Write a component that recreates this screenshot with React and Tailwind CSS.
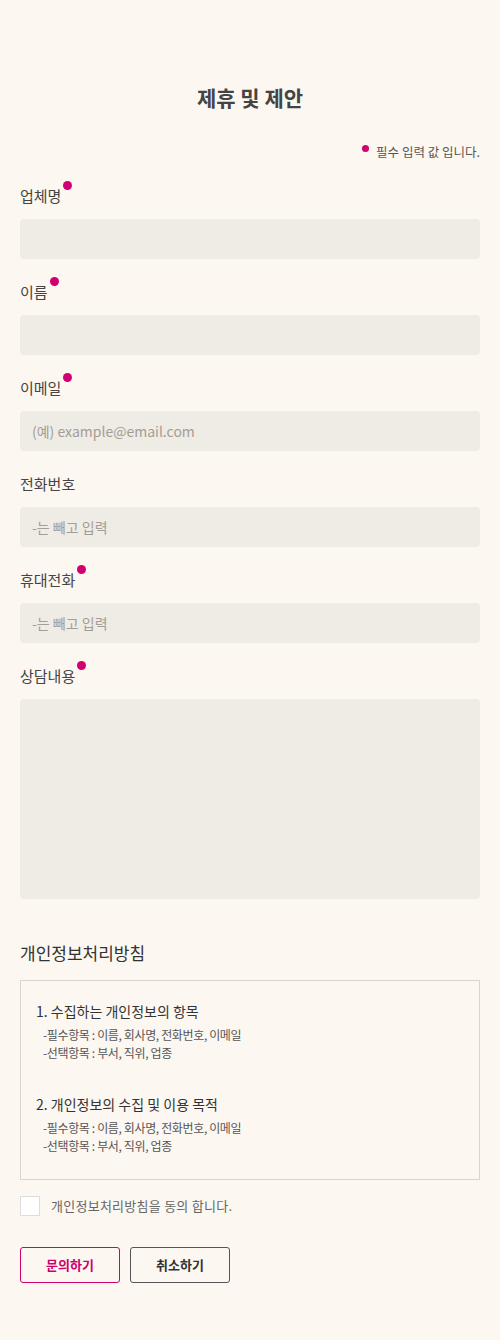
const font = { fontFamily: '"Noto Sans CJK KR", "Noto Sans", sans-serif' }

const Dot = () => (
  <span className="inline-block w-[9px] h-[9px] rounded-full bg-[#d0006f] align-top ml-[2px] mt-[-4px]" />
)

const Field = ({ label, required, placeholder = '', area }) => (
  <div className="mb-[22px]">
    <label className="block text-[15px] leading-[22px] text-[#444] mb-3">
      {label}
      {required && <Dot />}
    </label>
    {area ? (
      <textarea className="block w-full h-[200px] rounded bg-[#efebe5] resize-none outline-none px-4 py-3 text-[14px]" />
    ) : (
      <input
        placeholder={placeholder}
        className="block w-full h-[40px] rounded bg-[#efebe5] outline-none px-[12px] text-[14px] text-[#444] placeholder:text-[#a39d96]"
      />
    )}
  </div>
)

const Policy = ({ title }) => (
  <div>
    <p className="text-[14px] leading-[20px] text-[#333]">{title}</p>
    <div className="pl-[7px] mt-[5px] text-[12px] leading-[18px] tracking-[-0.03em] text-[#555]">
      <p>-필수항목 : 이름, 회사명, 전화번호, 이메일</p>
      <p>-선택항목 : 부서, 직위, 업종</p>
    </div>
  </div>
)

export default function App() {
  return (
    <div className="min-h-[1340px] bg-[#fcf7f0] px-5 pt-[84px]" style={font}>
      <h1 className="text-center text-[21px] leading-[26px] font-bold text-[#444]">제휴 및 제안</h1>
      <p className="mt-[33px] mb-[24px] text-right text-[12.5px] leading-[18px] text-[#555]">
        <span className="inline-block w-[7px] h-[7px] rounded-full bg-[#d0006f] align-top mt-[2px] mr-[7px]" />
        필수 입력 값 입니다.
      </p>

      <Field label="업체명" required />
      <Field label="이름" required />
      <Field label="이메일" required placeholder="(예) example@email.com" />
      <Field label="전화번호" placeholder="-는 빼고 입력" />
      <Field label="휴대전화" required placeholder="-는 빼고 입력" />
      <Field label="상담내용" required area />

      <h2 className="mt-[42px] text-[17px] leading-[24px] text-[#333]">개인정보처리방침</h2>
      <div className="mt-[15px] h-[200px] border border-[#dcd4c6] pl-[15px] pt-[20px] flex flex-col gap-[32px]">
        <Policy title="1. 수집하는 개인정보의 항목" />
        <Policy title="2. 개인정보의 수집 및 이용 목적" />
      </div>

      <label className="mt-[16px] flex items-center gap-[11px]">
        <span className="w-[20px] h-[20px] bg-white border border-[#ddd]" />
        <span className="text-[13px] tracking-[0.02em] text-[#666]">개인정보처리방침을 동의 합니다.</span>
      </label>

      <div className="mt-[31px] flex gap-[10px]">
        <button className="w-[100px] h-[36px] rounded-[3px] border border-[#d0006f] text-[#d0006f] text-[13px] font-bold">문의하기</button>
        <button className="w-[100px] h-[36px] rounded-[3px] border border-[#555] text-[#333] text-[13px] font-bold">취소하기</button>
      </div>
    </div>
  )
}
